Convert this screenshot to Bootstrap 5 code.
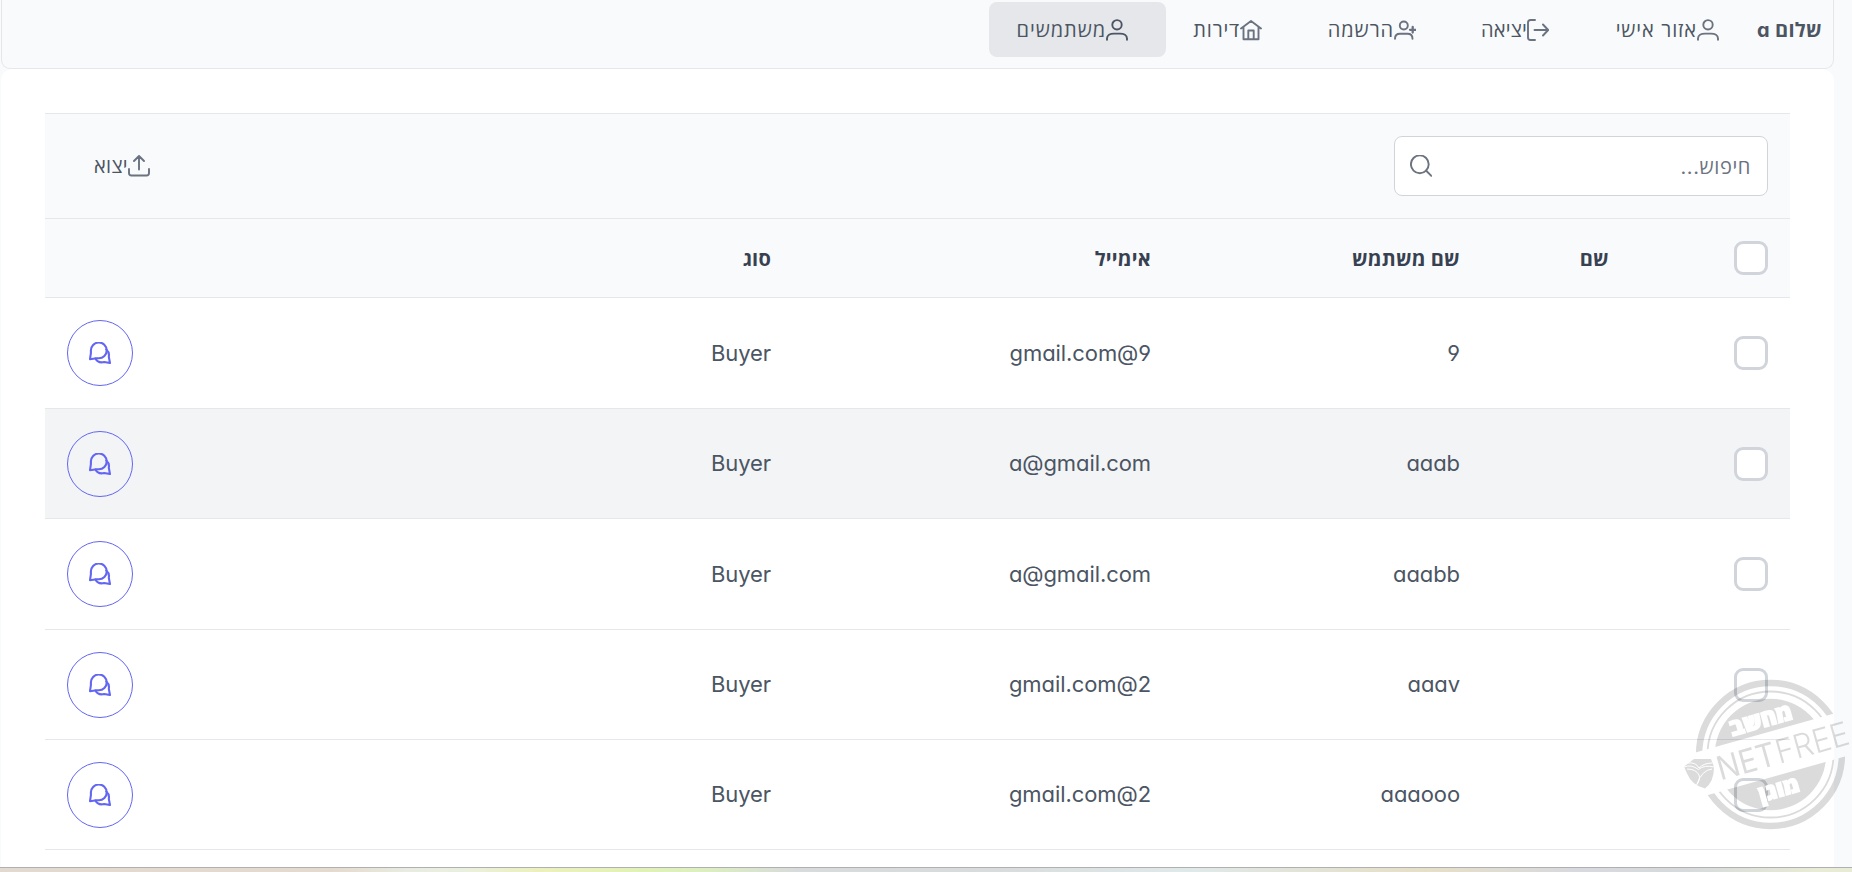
<!DOCTYPE html>
<html lang="he" dir="rtl">
<head>
<meta charset="utf-8">
<meta name="viewport" content="width=device-width, initial-scale=1">
<title>משתמשים</title>
<link href="https://cdn.jsdelivr.net/npm/bootstrap@5.3.0/dist/css/bootstrap.min.css" rel="stylesheet">
<style>
  body { background:#f9fafb; color:#4b5563; height:872px; overflow:hidden; font-family:"Inter","Open Sans",sans-serif; font-size:22px; line-height:1.5; font-feature-settings:"cv02","cv03","cv04","cv11"; }
  .page { width:1833px; margin-right:18px; }
  .topbar { height:69px; background:#f9fafb; border:1px solid #e5e7eb; border-top:0; border-radius:0 0 9px 9px; padding:2px 11px 0 0; }
  .hello { width:65px; height:55px; font-weight:700; font-size:20px; letter-spacing:.3px; white-space:nowrap; }
  .menu-link { height:55px; padding-right:38px; border-radius:8px; color:#4b5563; text-decoration:none; white-space:nowrap; font-size:20px; letter-spacing:.9px; }
  .menu-link.active { background:#e5e7eb; }
  .ic { width:22px; height:22px; flex:none; fill:none; stroke:#6b7280; stroke-width:1.9; stroke-linecap:round; stroke-linejoin:round; }
  .active .ic { stroke:#4b5563; }
  .w1 { width:170px; } .w2 { width:133px; letter-spacing:.2px; } .w3 { width:154px; } .w4 { width:134px; letter-spacing:.8px; } .w5 { width:177px; }
  .panel { background:#fff; border-radius:12px 12px 0 0; height:798px; padding:44px 44px 0 44px; }
  .tools { background:#f9fafb; border-top:1px solid #e5e7eb; border-bottom:1px solid #e5e7eb; height:106px; padding:0 22px; }
  .search { width:374px; height:60px; background:#fff; border:1px solid #d1d5db; border-radius:8px; padding:0 16px 0 15px; }
  .search input { border:0; outline:0; width:270px; padding:2px 0 0; font-size:20px; letter-spacing:.6px; color:#6b7280; }
  .search input::placeholder { color:#6b7280; opacity:1; }
  .export { padding:0 0 0 27px; border:0; background:none; color:#4b5563; font-size:20px; letter-spacing:.3px; }
  .users { table-layout:fixed; width:1745px; border-collapse:separate; border-spacing:0; margin:0; }
  .users th, .users td { border-bottom:1px solid #e5e7eb; padding:0 22px; vertical-align:middle; text-align:right; }
  .users th { height:79px; background:#f9fafb; color:#374151; font-weight:700; font-size:20px; letter-spacing:.2px; padding-top:1px; }
  .users th:first-child { padding-top:0; }
  .users td { height:110px; letter-spacing:-.08px; }
  .users tr.taller td { height:111px; }
  .users tr.hovered td { background:#f3f4f6; }
  .tick { display:block; width:34px; height:34px; border:3px solid #d1d5db; border-radius:9px; background:#fff; }
  .chat { width:66px; height:66px; border:1px solid #6366f1; border-radius:50%; background:none; display:inline-flex; align-items:center; justify-content:center; vertical-align:middle; padding:0; }
  .chat .ic { stroke:#6366f1; stroke-width:2.1; }
  .stamp { position:fixed; left:1682px; top:676px; width:170px; height:158px; }
  .strip { position:fixed; left:0; right:0; bottom:0; height:5px; border-top:1px solid #b0b0b0; background:linear-gradient(90deg,#e2d9d0 0,#e5dace 18%,#e8ece2 22%,#eaf0e0 25%,#edf0bd 29%,#e0f2b8 35%,#dcefc0 38%,#d8dbdc 43%,#d9dcdc 54%,#e0e9ea 64%,#e3e2d3 72%,#e6dfc8 77%,#d8d9df 85%,#d6dadc 91%,#e8ebd6 98%); }
</style>
</head>
<body>
<svg width="0" height="0" class="position-absolute">
  <symbol id="user" viewBox="0 0 22 22"><circle cx="11" cy="5.800" r="4.700"/><path d="M1 20.800v-1.200c0-3.200 3.200-5 7-5h6c3.800 0 7 1.800 7 5v1.200"/></symbol>
  <symbol id="chats" viewBox="0 0 22 22"><path d="M1 17.200l.9-6V8.600A7.900 7.900 0 1 1 9.800 16.300H7.500z"/><path d="M17.300 7.500c2.100 1.700 3 4.700 2.500 7.300l1.200 6.200-5.800-1c-3.800.9-7.200-.5-8.700-3.500"/></symbol>
</svg>
<div class="page">
  <nav class="topbar d-flex align-items-start">
    <div class="hello d-flex align-items-center"><span>שלום a</span></div>
    <a class="menu-link d-flex align-items-center w1"><svg class="ic"><use href="#user"/></svg><span>אזור אישי</span></a>
    <a class="menu-link d-flex align-items-center w2"><svg class="ic" viewBox="0 0 22 22"><path d="M8 1H3.500Q1 1 1 3.500v15Q1 21 3.500 21H8M7.500 11H21M16 5.500l5.200 5.500-5.200 5.500"/></svg><span>יציאה</span></a>
    <a class="menu-link d-flex align-items-center w3"><svg class="ic" viewBox="0 0 22 22"><circle cx="9.800" cy="6.500" r="4"/><path d="M1 19.700c0-3.500 2-5 5-5h7.500c3 0 5 1.500 5 5"/><path d="M18.700 8v5.500M16 10.800h5.500" stroke-width="2.300"/></svg><span>הרשמה</span></a>
    <a class="menu-link d-flex align-items-center w4"><svg class="ic" viewBox="0 0 22 22"><path d="M1 9.500l10-7.500 10 7.500M3.500 8v12.300h15V8M8.300 20v-8.500h5.400V20"/></svg><span>דירות</span></a>
    <a class="menu-link active d-flex align-items-center w5"><svg class="ic"><use href="#user"/></svg><span>משתמשים</span></a>
  </nav>
  <main class="panel">
    <div class="tools d-flex align-items-center justify-content-between">
      <div class="search d-flex align-items-center justify-content-between">
        <input type="text" placeholder="חיפוש...">
        <svg class="ic" viewBox="0 0 22 22"><circle cx="9.800" cy="9.300" r="8.900"/><path d="M16 15.500l5.300 5.300"/></svg>
      </div>
      <button class="export d-flex align-items-center"><svg class="ic" viewBox="0 0 22 22"><path d="M1 14v4Q1 20.500 3.500 20.500h15q2.500 0 2.500-2.500v-4M11 14.500V1M6 6l5-5 5 5"/></svg><span>יצוא</span></button>
    </div>
    <table class="users">
      <colgroup><col style="width:159px"><col style="width:149px"><col style="width:309px"><col style="width:380px"><col></colgroup>
      <thead><tr><th><span class="tick"></span></th><th>שם</th><th>שם משתמש</th><th>אימייל</th><th>סוג</th></tr></thead>
      <tbody id="rows"></tbody>
    </table>
  </main>
</div>
<svg class="stamp" viewBox="1682 676 170 158" direction="ltr">
  <defs>
    <clipPath id="halves"><path d="M1670 759.600L1870 703.400V650H1670zM1670 805.600L1870 749.400V860H1670z"/></clipPath>
  </defs>
  <g opacity=".14">
    <g clip-path="url(#halves)">
      <circle cx="1770.500" cy="754.500" r="71.400" fill="none" stroke="#000" stroke-width="6.500"/>
      <circle cx="1770.500" cy="754.500" r="63" fill="none" stroke="#000" stroke-width="1.800"/>
      <circle cx="1770.500" cy="754.500" r="55.700"/>
    </g>
    <path d="M1684 766.500l10-7.500h17l3 8q0 15-9 21.500-13-3-18-15z"/>
    <g transform="translate(1720.500 780.500) rotate(-15.700)" font-family="Inter" font-size="33">
      <text x="0" y="0" font-weight="400" textLength="60" lengthAdjust="spacingAndGlyphs">NET</text>
      <text x="61" y="0" font-weight="300" textLength="75" lengthAdjust="spacingAndGlyphs">FREE</text>
    </g>
  </g>
  <path d="M1684 767q7-3 14.500 2.500 6-5 15.500-2.500M1688 763q8-1 11 5 5-5 13-5M1687 769q9 0 12 6 2 5-4 12M1712 769q-10 1-15 15" fill="none" stroke="#fff" stroke-width="1"/>
  <g fill="#fff" stroke="#fff" stroke-width="1.500" font-family="Open Sans, sans-serif" font-weight="800" text-anchor="middle">
    <text transform="translate(1763 727.500) rotate(-15.700)" font-size="23" textLength="64" lengthAdjust="spacingAndGlyphs">מחשב</text>
    <text transform="translate(1781 796.500) rotate(-15.700)" font-size="22" textLength="41" lengthAdjust="spacingAndGlyphs">מוגן</text>
  </g>
</svg>
<div class="strip"></div>
<script src="https://cdn.jsdelivr.net/npm/bootstrap@5.3.0/dist/js/bootstrap.bundle.min.js"></script>
<script>
  const users = [
    { name: "9", mail: "9@gmail.com", row: "taller" },
    { name: "aaab", mail: "a@gmail.com", row: "hovered" },
    { name: "aaabb", mail: "a@gmail.com", row: "taller" },
    { name: "aaav", mail: "2@gmail.com", row: "" },
    { name: "aaaooo", mail: "2@gmail.com", row: "" }
  ];
  document.getElementById("rows").innerHTML = users.map(u => `
    <tr class="${u.row}">
      <td><span class="tick"></span></td><td></td><td>${u.name}</td><td>${u.mail}</td>
      <td><div class="d-flex justify-content-between align-items-center"><span>Buyer</span><button class="chat"><svg class="ic"><use href="#chats"/></svg></button></div></td>
    </tr>`).join("");
</script>
</body>
</html>
